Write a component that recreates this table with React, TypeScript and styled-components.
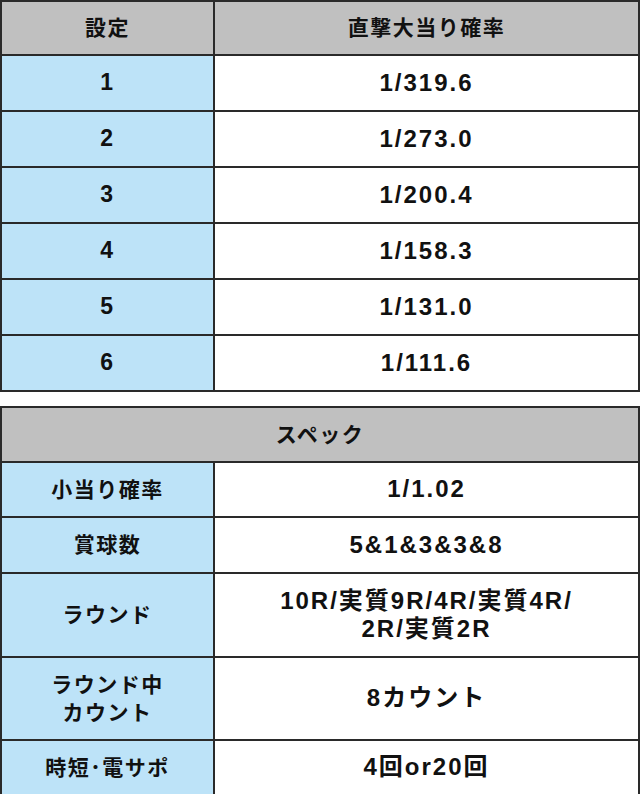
import React from "react";
import styled, { createGlobalStyle } from "styled-components";

const Global = createGlobalStyle`
  html, body { margin: 0; padding: 0; background: #ffffff; }
  body { font-family: "Liberation Sans", "Noto Sans CJK JP", sans-serif; }
`;

const Page = styled.div`
  width: 640px;
  display: flex;
  flex-direction: column;
  gap: 14px;
`;

const Table = styled.div`
  display: grid;
  grid-template-columns: 213px 1fr;
  border-top: 2px solid #2a2a2a;
  border-left: 2px solid #2a2a2a;
  box-sizing: border-box;
`;

const Cell = styled.div<{ $h: number; $kind: "head" | "label" | "value"; $span?: boolean }>`
  box-sizing: border-box;
  height: ${(p) => p.$h}px;
  grid-column: ${(p) => (p.$span ? "1 / span 2" : "auto")};
  border-right: 2px solid #2a2a2a;
  border-bottom: 2px solid #2a2a2a;
  display: flex;
  align-items: center;
  justify-content: center;
  text-align: center;
  font-weight: 700;
  color: #111;
  background: ${(p) => (p.$kind === "head" ? "#c0c0c0" : p.$kind === "label" ? "#bde3f8" : "#ffffff")};
  font-size: ${(p) => (p.$kind === "value" ? "24px" : "21px")};
  letter-spacing: ${(p) => (p.$kind === "value" ? "2px" : "1.5px")};
  line-height: ${(p) => (p.$kind === "value" ? 1.17 : 1.3)};
`;

const Num = styled.span`
  font-size: 23px;
`;

const rates = [
  ["1", "1/319.6"],
  ["2", "1/273.0"],
  ["3", "1/200.4"],
  ["4", "1/158.3"],
  ["5", "1/131.0"],
  ["6", "1/111.6"],
];

const specs: { label: React.ReactNode; value: React.ReactNode; h: number }[] = [
  { label: "小当り確率", value: "1/1.02", h: 55 },
  { label: "賞球数", value: "5&1&3&3&8", h: 56 },
  { label: "ラウンド", value: <>10R/実質9R/4R/実質4R/<br />2R/実質2R</>, h: 84 },
  { label: <>ラウンド中<br />カウント</>, value: "8カウント", h: 83 },
  { label: "時短･電サポ", value: "4回or20回", h: 55 },
];

export default function App() {
  return (
    <>
      <Global />
      <Page>
        <Table>
          <Cell $h={54} $kind="head">設定</Cell>
          <Cell $h={54} $kind="head">直撃大当り確率</Cell>
          {rates.map(([s, r]) => (
            <React.Fragment key={s}>
              <Cell $h={56} $kind="label"><Num>{s}</Num></Cell>
              <Cell $h={56} $kind="value">{r}</Cell>
            </React.Fragment>
          ))}
        </Table>
        <Table>
          <Cell $h={55} $kind="head" $span>スペック</Cell>
          {specs.map((s, i) => (
            <React.Fragment key={i}>
              <Cell $h={s.h} $kind="label">{s.label}</Cell>
              <Cell $h={s.h} $kind="value">{s.value}</Cell>
            </React.Fragment>
          ))}
        </Table>
      </Page>
    </>
  );
}
